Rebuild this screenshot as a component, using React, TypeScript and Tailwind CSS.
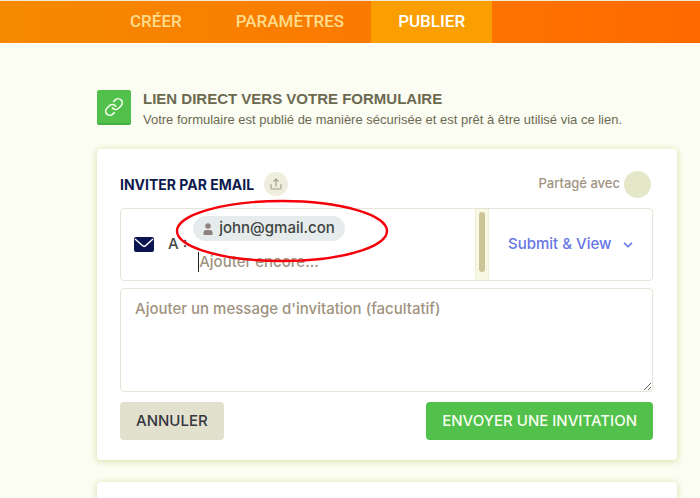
import { ChevronDown, Link } from "lucide-react";
import { clsx } from "clsx";

const tabs = [
  { label: "CRÉER", active: false },
  { label: "PARAMÈTRES", active: false },
  { label: "PUBLIER", active: true },
];

const cardShadow = "shadow-[0_1px_6px_1px_#dfe3b0]";

function TopNav() {
  return (
    <nav className="flex h-[43px] border-t border-[#f3ead6] bg-gradient-to-r from-[#f58a00] to-[#ff6900] pl-[103px] font-['Roboto',sans-serif] text-[17px] font-medium">
      {tabs.map((tab) => (
        <a
          key={tab.label}
          href="#"
          className={clsx(
            "flex items-center px-[27px]",
            tab.active ? "bg-[#fb9f00] text-white" : "text-[#ffdc8c]",
          )}
        >
          {tab.label}
        </a>
      ))}
    </nav>
  );
}

function DirectLink() {
  return (
    <div className="flex gap-3">
      <div className="flex h-[35px] w-[34px] shrink-0 items-center justify-center rounded-xs border-b-2 border-[#43b043] bg-[#51c14b]">
        <Link className="size-5 text-[#f4fbe8]" strokeWidth={2} />
      </div>
      <div className="font-['Liberation_Sans',Arial,sans-serif] text-[#6c6951]">
        <h1 className="text-[15px] leading-[18px] font-bold">LIEN DIRECT VERS VOTRE FORMULAIRE</h1>
        <p className="mt-1 text-[13px] leading-4">
          Votre formulaire est publié de manière sécurisée et est prêt à être utilisé via ce lien.
        </p>
      </div>
    </div>
  );
}

function RecipientField() {
  return (
    <div className="flex h-[73px] rounded border border-[#e6e4d8]">
      <div className="flex min-w-0 flex-1 items-center pl-[13px]">
        <svg viewBox="0 0 20 15" className="h-[15px] w-5 shrink-0">
          <rect width="20" height="15" rx="2" fill="#0a1551" />
          <path d="M1 2 L8.4 8.6 Q10 10 11.6 8.6 L19 2" fill="none" stroke="#fff" strokeWidth="1.4" />
        </svg>
        <label htmlFor="recipient" className="ml-[14px] text-[15px] font-medium text-[#454743]">
          A :
        </label>
        <div className="relative ml-1.5 flex h-full min-w-0 flex-1 flex-col items-start pt-[7px]">
          <span className="flex h-[25px] items-center gap-1.5 rounded-full bg-[#e6ecec] px-2.5 text-[15px] font-medium text-[#3f4542]">
            <svg viewBox="0 0 10 12" className="h-3 w-2.5" fill="#8f8280">
              <circle cx="5" cy="3" r="2.8" />
              <path d="M.5 12 V9.4 Q.5 7 3 7 H7 Q9.5 7 9.5 9.4 V12 Z" />
            </svg>
            john@gmail.con
          </span>
          <input
            id="recipient"
            type="email"
            placeholder="Ajouter encore..."
            className="mt-[11px] ml-[5px] h-5 w-40 border-l border-[#222] text-[15px] font-medium outline-none placeholder:text-[#a0937f]"
          />
          <svg
            viewBox="0 0 214 64"
            className="pointer-events-none absolute -top-[10px] -left-[18px] h-16 w-[214px]"
            fill="none"
            stroke="#f5000a"
            strokeWidth="2.4"
          >
            <ellipse cx="107" cy="32" rx="105" ry="30" />
          </svg>
        </div>
      </div>
      <div className="w-[14px] border-x border-[#eef0d4] bg-[#f6f8e4] px-[3px] pt-[3px]">
        <div className="h-[60px] rounded-full bg-[#cbc497]" />
      </div>
      <div className="relative flex w-[163px] items-center text-[#6676e5]">
        <select
          aria-label="Submit & View"
          className="w-full appearance-none pr-8 pl-[19px] text-[15px] font-medium outline-none"
        >
          <option>Submit &amp; View</option>
        </select>
        <ChevronDown className="pointer-events-none absolute right-[17px] size-[14px]" strokeWidth={3} />
      </div>
    </div>
  );
}

function InviteCard() {
  return (
    <section className={clsx("rounded bg-white py-5 pr-6 pl-[23px]", cardShadow)}>
      <div className="flex h-[30px] items-center">
        <h2 className="text-[14px] font-bold text-[#0f1a4d]">INVITER PAR EMAIL</h2>
        <button
          type="button"
          aria-label="Partager"
          className="ml-2.5 flex size-6 items-center justify-center rounded-full bg-[#edeedd]"
        >
          <svg viewBox="0 0 12 12" className="size-3" fill="none" stroke="#a89d92" strokeWidth="1.2" strokeLinecap="round" strokeLinejoin="round">
            <path d="M1 6.5 V10 Q1 11 2 11 H10 Q11 11 11 10 V6.5" />
            <path d="M6 8 V1.2 M3.8 3.2 L6 1 L8.2 3.2" />
          </svg>
        </button>
        <span className="ml-auto text-[13px] font-medium text-[#a0947f]">Partagé avec</span>
        <span className="mr-0.5 ml-1 size-[27px] rounded-full bg-[#e5e7c9]" />
      </div>

      <form className="mt-[9px]">
        <RecipientField />
        <textarea
          aria-label="Message d'invitation"
          placeholder="Ajouter un message d'invitation (facultatif)"
          className="mt-[7px] block h-[104px] w-full rounded border border-[#e6e4d8] px-[14px] py-2.5 text-[15px] leading-5 font-medium outline-none placeholder:text-[#a0937f]"
        />
        <div className="mt-2.5 flex h-[38px] justify-between text-[15px] font-medium">
          <button type="button" className="rounded bg-[#e2e1cd] px-4 text-[#33373f]">
            ANNULER
          </button>
          <button type="button" className="rounded bg-[#51c14b] px-4 text-[#f8fdf0]">
            ENVOYER UNE INVITATION
          </button>
        </div>
      </form>
    </section>
  );
}

export default function App() {
  return (
    <div className="flex min-h-screen flex-col bg-[#fbfdf3] font-['Inter',sans-serif]">
      <TopNav />
      <main className="flex flex-1 flex-col pt-[47px] pr-[23px] pl-[97px]">
        <DirectLink />
        <div className="mt-[21px] flex flex-1 flex-col gap-[22px]">
          <InviteCard />
          <section className={clsx("flex-1 rounded-t bg-white", cardShadow)} />
        </div>
      </main>
    </div>
  );
}
